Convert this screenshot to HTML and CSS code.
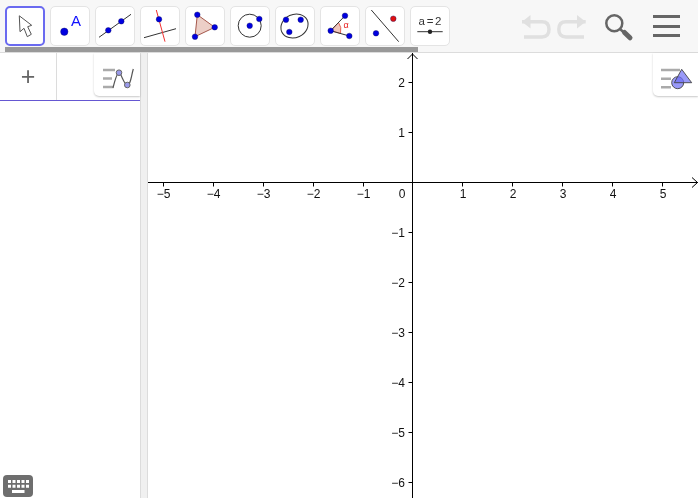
FILE: index.html
```html
<!DOCTYPE html>
<html lang="en">
<head>
<meta charset="utf-8">
<title>GeoGebra Graphing</title>
<link rel="stylesheet" href="styles.css">
</head>
<body>
<div class="app">
  <header class="toolbar">
    <div class="tools">
      <button class="tool active"><svg viewBox="0 0 40 40"><path class="arrow" d="M14.3 9.800 15 25.700 19 22.300 22.300 30.700 26.300 28.300 22.700 20.700 26.700 19.300Z"/></svg></button>
      <button class="tool"><svg viewBox="0 0 40 40"><circle class="pt big" cx="14.300" cy="25.700" r="3.700"/><text class="label-a" x="21" y="19.500">A</text></svg></button>
      <button class="tool"><svg viewBox="0 0 40 40"><line class="ln" x1="4" y1="31.300" x2="36" y2="8.300"/><circle class="pt" cx="13.300" cy="24.300" r="2.800"/><circle class="pt" cx="26.300" cy="15.300" r="2.800"/></svg></button>
      <button class="tool"><svg viewBox="0 0 40 40"><line class="ln" x1="4" y1="31.700" x2="36" y2="22.700"/><line class="red" x1="16.300" y1="4" x2="25" y2="35.700"/><circle class="pt" cx="19" cy="13.300" r="2.800"/></svg></button>
      <button class="tool"><svg viewBox="0 0 40 40"><polygon class="poly" points="12.300,8.700 29.700,21.300 10,30.700"/><circle class="pt" cx="12.300" cy="8.700" r="2.800"/><circle class="pt" cx="29.700" cy="21.300" r="2.800"/><circle class="pt" cx="10" cy="30.700" r="2.800"/></svg></button>
      <button class="tool"><svg viewBox="0 0 40 40"><circle class="ln" cx="19.700" cy="19.700" r="11.500"/><circle class="pt" cx="19.700" cy="19.700" r="2.800"/><circle class="pt" cx="29.300" cy="13" r="2.800"/></svg></button>
      <button class="tool"><svg viewBox="0 0 40 40"><ellipse class="ln" cx="19.500" cy="20" rx="14" ry="11.500" transform="rotate(-25 19.500 20)"/><circle class="pt" cx="11" cy="13.700" r="2.800"/><circle class="pt" cx="25.700" cy="13.700" r="2.800"/><circle class="pt" cx="14.300" cy="26" r="2.800"/></svg></button>
      <button class="tool"><svg viewBox="0 0 40 40"><path class="wedge" d="M10.700 24.700 18.500 16.500Q22 21 20.500 27.500Z"/><path class="ln" d="M25 9.700 10.700 24.700 29.300 30"/><circle class="pt" cx="25" cy="9.700" r="2.800"/><circle class="pt" cx="10.700" cy="24.700" r="2.800"/><circle class="pt" cx="29.300" cy="30" r="2.800"/><text class="alpha" x="23.500" y="22">α</text></svg></button>
      <button class="tool"><svg viewBox="0 0 40 40"><line class="ln" x1="6.300" y1="4" x2="33.700" y2="35.700"/><circle class="pt red-pt" cx="28.300" cy="12.700" r="2.800"/><circle class="pt" cx="11" cy="27.300" r="2.800"/></svg></button>
      <button class="tool"><svg viewBox="0 0 40 40"><text class="slider-text" x="20" y="19">a = 2</text><line class="ln" x1="7.300" y1="25.700" x2="32.700" y2="25.700"/><circle class="knob" cx="20" cy="25.700" r="2.200"/></svg></button>
    </div>
    <div class="actions">
      <svg class="undo" viewBox="0 0 36 30"><path d="M3 12.700H23Q30 12.700 30 20.300T23 28H5"/><path class="head" d="M11.500 6 3 12.700 11.500 19.500Z"/></svg>
      <svg class="redo" viewBox="0 0 36 30"><path d="M30.700 12.700H11Q3.800 12.700 3.800 20.300T11 28H29"/><path class="head" d="M22 6 30.700 12.700 22 19.500Z"/></svg>
      <svg class="search" viewBox="0 0 34 34"><circle cx="12.300" cy="11.300" r="8"/><line x1="18" y1="17" x2="22" y2="20.500"/><line class="handle" x1="22.500" y1="20.500" x2="28" y2="25.800"/></svg>
      <div class="menu"><span></span><span></span><span></span></div>
    </div>
  </header>
  <div class="scrollthumb"></div>
  <main class="workspace">
    <aside class="algebra">
      <div class="input-row">
        <div class="plus">+</div>
        <div class="input-field"></div>
      </div>
    </aside>
    <div class="divider"></div>
    <section class="graphics">
      <svg class="plot" viewBox="0 0 550 445">
        <g class="axes">
          <line x1="0" y1="129.500" x2="550" y2="129.500"/>
          <line x1="264.500" y1="0" x2="264.500" y2="445"/>
          <path d="M259.500 6 264.500 1 269.500 6M544 124.500 549.500 129.500 544 134.500"/>
        </g>
        <path class="ticks" d="M15.500 129.500v4M65.500 129.500v4M115.500 129.500v4M165.500 129.500v4M215.500 129.500v4M314.500 129.500v4M364.500 129.500v4M414.500 129.500v4M464.500 129.500v4M514.500 129.500v4M260.500 29.500h4M260.500 79.500h4M260.500 179.500h4M260.500 229.500h4M260.500 279.500h4M260.500 329.500h4M260.500 379.500h4M260.500 429.500h4"/>
        <g class="xlabels">
          <text x="15.500" y="145">−5</text><text x="65.500" y="145">−4</text><text x="115.500" y="145">−3</text><text x="165.500" y="145">−2</text><text x="215.500" y="145">−1</text>
          <text x="254" y="145">0</text>
          <text x="315" y="145">1</text><text x="365" y="145">2</text><text x="415" y="145">3</text><text x="465" y="145">4</text><text x="515" y="145">5</text>
        </g>
        <g class="ylabels">
          <text x="257" y="34">2</text><text x="257" y="84">1</text>
          <text x="257" y="184">−1</text><text x="257" y="234">−2</text><text x="257" y="284">−3</text><text x="257" y="334">−4</text><text x="257" y="384">−5</text><text x="257" y="434">−6</text>
        </g>
      </svg>
    </section>
  </main>
  <button class="stylebar left-bar"><svg viewBox="0 0 36 26"><path class="bars" d="M1 5H13M1 13.500H10M1 22H11"/><path class="curve" d="M11 23C13 15 15 7.700 17 7.700S22 20 25.300 20 29 12 31.300 4"/><circle class="node" cx="17" cy="7.700" r="2.800"/><circle class="node" cx="25.300" cy="20" r="2.800"/></svg></button>
  <button class="stylebar right-bar"><svg viewBox="0 0 36 26"><path class="bars" d="M0 5H19M0 13.700H10M0 22.300H10"/><circle class="shape" cx="16.700" cy="17.700" r="6"/><polygon class="shape tri" points="20.700,4.300 30.700,17.700 13.300,17.700"/></svg></button>
  <button class="keyboard"><svg viewBox="0 0 30 22"><path class="keys" d="M5 5h3v3H5zM9.500 5h3v3h-3zM14 5h3v3h-3zM18.500 5h3v3h-3zM23 5h3v3h-3zM5 9.800h3v3H5zM9.500 9.800h3v3h-3zM14 9.800h3v3h-3zM18.500 9.800h3v3h-3zM23 9.800h3v3h-3zM9 15h12.500v3H9z"/></svg></button>
</div>
</body>
</html>
```
FILE: styles.css
```css
* { box-sizing: border-box; }
html, body { margin: 0; background: #fff; }
body { font-family: "Liberation Sans", Arial, sans-serif; }
button { padding: 0; margin: 0; font: inherit; }

.app {
  position: relative;
  width: 698px;
  height: 498px;
  display: flex;
  flex-direction: column;
  overflow: hidden;
  will-change: transform;
}

/* toolbar */
.toolbar {
  flex: 0 0 53px;
  display: flex;
  justify-content: space-between;
  background: #f7f7f7;
  border-bottom: 1px solid #dcdcdc;
  padding: 6px 0 0 5px;
}
.tools { display: flex; gap: 5px; align-items: flex-start; }
.tool {
  width: 40px;
  height: 40px;
  background: #fff;
  border: 1px solid #e4e4e4;
  border-radius: 5px;
  display: block;
}
.tool svg { display: block; width: 40px; height: 40px; margin: -1px; }
.tool.active { border: 2px solid #6a6af0; }
.tool.active svg { margin: -2px; }

.arrow { fill: #fff; stroke: #555; stroke-width: 1; }
.pt { fill: #0000e0; stroke: #101060; stroke-width: .4; }
.red-pt { fill: #e01010; }
.ln { fill: none; stroke: #333; stroke-width: 1; }
.red { stroke: #f03030; stroke-width: 1; }
.poly { fill: #eccfc7; stroke: #a5584c; stroke-width: 1; }
.wedge { fill: #f0c6bc; stroke: #e04a3a; stroke-width: .8; }
.label-a { font: 15px "Liberation Sans", sans-serif; fill: #1010ff; }
.alpha { font: 9px "Liberation Sans", sans-serif; fill: #e82020; }
.slider-text { font: 11.500px "Liberation Sans", sans-serif; word-spacing: -1.500px; fill: #333; text-anchor: middle; }
.knob { fill: #222; }

.actions { display: flex; align-items: flex-start; }
.undo, .redo { width: 36px; height: 30px; margin-top: 3px; fill: none; stroke: #e0e0e0; stroke-width: 3.500; }
.head { fill: #e0e0e0; stroke: none; }
.search { width: 34px; height: 34px; margin: 6px 0 0 11px; fill: none; stroke: #666; stroke-width: 2.500; }
.handle { stroke-width: 5; stroke-linecap: round; }
.menu {
  width: 27px;
  margin: 9px 18px 0 17px;
  display: flex;
  flex-direction: column;
  gap: 6.500px;
}
.menu span { display: block; height: 3px; background: #666; }

.scrollthumb {
  position: absolute;
  left: 5px;
  top: 47px;
  width: 413px;
  height: 5px;
  background: #999;
}

/* workspace */
.workspace { flex: 1; display: flex; min-height: 0; }
.algebra { flex: 0 0 140px; background: #fff; }
.input-row {
  height: 48px;
  display: flex;
  border-bottom: 1px solid #6557d2;
}
.plus {
  flex: 0 0 57px;
  border-right: 1px solid #dcdcdc;
  color: #666;
  font-size: 25px;
  line-height: 46px;
  text-align: center;
}
.input-field { flex: 1; }
.divider {
  flex: 0 0 8px;
  background: #f0f0f0;
  border-left: 1px solid #dcdcdc;
  border-right: 1px solid #dcdcdc;
}
.graphics { flex: 1; min-width: 0; background: #fff; }
.plot { display: block; width: 550px; height: 445px; }
.axes line, .axes path, .ticks { fill: none; stroke: #000; stroke-width: 1; }
.xlabels text, .ylabels text { font: 12px "Liberation Sans", sans-serif; fill: #111; }
.xlabels text { text-anchor: middle; }
.ylabels text { text-anchor: end; }

/* overlay toggles */
.stylebar {
  position: absolute;
  top: 53px;
  height: 43px;
  background: #fff;
  border: 0;
  box-shadow: 0 1px 2px rgba(0, 0, 0, .22);
  border-bottom-left-radius: 5px;
}
.stylebar svg { display: block; width: 36px; height: 26px; margin: 7px 0 0 8px; overflow: visible; }
.left-bar { left: 94px; width: 46px; }
.right-bar { left: 653px; width: 45px; }
.bars { fill: none; stroke: #aaa; stroke-width: 2.500; }
.curve { fill: none; stroke: #555; stroke-width: 1.200; }
.node { fill: #9a9aea; stroke: #666; stroke-width: 1; }
.shape { fill: rgba(110, 110, 245, .7); stroke: #444; stroke-width: .9; }

.keyboard {
  position: absolute;
  left: 3px;
  top: 475px;
  width: 30px;
  height: 22px;
  background: #6e6e6e;
  border: 0;
  border-radius: 4px;
}
.keyboard svg { display: block; width: 30px; height: 22px; }
.keys { fill: #fff; }
```
